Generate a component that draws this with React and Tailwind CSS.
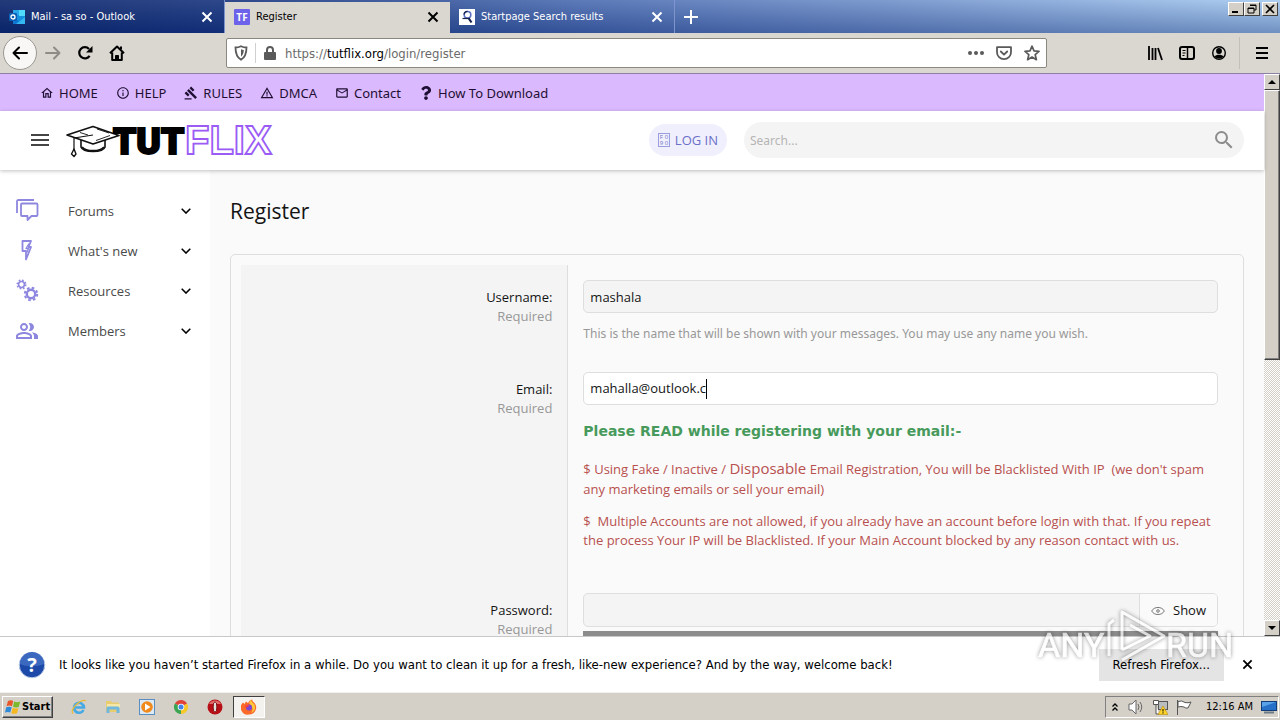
import clsx from "clsx"
import {
  MdGavel,
  MdInfoOutline,
  MdOutlineHome,
  MdOutlineMail,
  MdOutlinePeopleAlt,
  MdSearch,
  MdWarningAmber,
} from "react-icons/md"
import { FaQuestion } from "react-icons/fa"

const topLinks = [
  { label: "HOME", icon: MdOutlineHome },
  { label: "HELP", icon: MdInfoOutline },
  { label: "RULES", icon: MdGavel },
  { label: "DMCA", icon: MdWarningAmber },
  { label: "Contact", icon: MdOutlineMail },
  { label: "How To Download", icon: FaQuestion },
]

const sideLinks = [
  { label: "Forums", icon: ForumsIcon },
  { label: "What's new", icon: BoltIcon },
  { label: "Resources", icon: GearsIcon },
  { label: "Members", icon: MembersIcon },
]

/* ---------- icons ---------- */

function CloseIcon({ className, width = 2 }) {
  return (
    <svg viewBox="0 0 12 12" className={clsx("size-3", className)} fill="none" stroke="currentColor" strokeWidth={width}>
      <path d="M1.5 1.5l9 9M10.5 1.5l-9 9" />
    </svg>
  )
}

function OutlookIcon() {
  return (
    <svg viewBox="0 0 16 16" className="size-4">
      <rect x="4" y="1" width="12" height="14" rx="1" fill="#1490df" />
      <rect x="10" y="1" width="6" height="6" fill="#50d9ff" />
      <rect x="4" y="1" width="6" height="5" fill="#28a8ea" />
      <path d="M4 9l6 3 6-4v7H4z" fill="#0f78d4" />
      <path d="M16 8l-9 7h9z" fill="#35b8f1" />
      <rect x="0" y="4" width="8" height="8" rx="1" fill="#0a5fb4" />
      <circle cx="4" cy="8" r="2" fill="none" stroke="#fff" strokeWidth="1.3" />
    </svg>
  )
}

function TutflixFavicon() {
  return (
    <svg viewBox="0 0 16 16" className="size-4">
      <rect width="16" height="16" rx="1" fill="#6c63ea" />
      <text x="8" y="12" textAnchor="middle" fontSize="10" fontWeight="700" fill="#fff" fontFamily="Open Sans, sans-serif">
        TF
      </text>
    </svg>
  )
}

function StartpageIcon() {
  return (
    <svg viewBox="0 0 16 16" className="size-4">
      <rect width="16" height="16" fill="#fff" />
      <circle cx="8.500" cy="5.800" r="3.300" fill="none" stroke="#5a6fc0" strokeWidth="1.600" />
      <path d="M5 5.500a3.500 3.500 0 0 1 3.500-3.200" fill="none" stroke="#16204e" strokeWidth="1.200" />
      <path d="M9.500 9l3 4.500" stroke="#16204e" strokeWidth="2.200" />
      <path d="M3.500 9.500H9" stroke="#16204e" strokeWidth="1.200" />
    </svg>
  )
}

function ArrowIcon({ flip }) {
  return (
    <svg viewBox="0 0 16 16" className={clsx("size-4", flip && "rotate-180")} fill="none" stroke="currentColor" strokeWidth="2" strokeLinecap="round" strokeLinejoin="round">
      <path d="M15 8H1.5M7 2.5L1.5 8 7 13.5" />
    </svg>
  )
}

function ReloadIcon() {
  return (
    <svg viewBox="0 0 16 16" className="size-4" fill="none" stroke="currentColor" strokeWidth="2.2">
      <path d="M12.6 10.8A5.6 5.6 0 1 1 12 4" />
      <path d="M15.5 1v6.5H9z" fill="currentColor" stroke="none" />
    </svg>
  )
}

function HouseIcon() {
  return (
    <svg viewBox="0 0 16 16" className="size-4" fill="none" stroke="currentColor" strokeWidth="2" strokeLinejoin="round">
      <path d="M1 8.2L8 1.5l7 6.7M3.2 7.5V15h9.6V7.5" />
      <path d="M6.5 15v-4.5h3V15z" fill="currentColor" strokeWidth="1" />
      <path d="M12 1.5v3" />
    </svg>
  )
}

function ShieldIcon() {
  return (
    <svg viewBox="0 0 16 16" className="size-4">
      <path d="M8 1.200c2 1 3.800 1.300 5.500 1.300 0 5-.8 9.500-5.500 12.300C3.300 12 2.500 7.500 2.500 2.500 4.200 2.500 6 2.200 8 1.200z" fill="none" stroke="currentColor" strokeWidth="1.800" />
      <path d="M8 4.300c1 .4 1.800.6 2.800.7-.1 2.800-.8 5-2.800 6.700z" fill="currentColor" />
    </svg>
  )
}

function LockIcon() {
  return (
    <svg viewBox="0 0 16 16" className="size-4">
      <path d="M5 8V5a3 3 0 0 1 6 0v3" fill="none" stroke="currentColor" strokeWidth="2" />
      <rect x="2" y="7" width="12" height="8" rx="1" fill="currentColor" />
    </svg>
  )
}

function DotsIcon() {
  return (
    <svg viewBox="0 0 16 16" className="size-4" fill="currentColor">
      <circle cx="2" cy="8" r="2" />
      <circle cx="8" cy="8" r="2" />
      <circle cx="14" cy="8" r="2" />
    </svg>
  )
}

function PocketIcon() {
  return (
    <svg viewBox="0 0 16 16" className="size-4" fill="none" stroke="currentColor" strokeWidth="1.800" strokeLinecap="round" strokeLinejoin="round">
      <path d="M1 2.200h14v5a7 7 0 0 1-14 0z" />
      <path d="M4.800 6.500L8 9.600l3.200-3.100" />
    </svg>
  )
}

function StarIcon() {
  return (
    <svg viewBox="0 0 16 16" className="size-4" fill="none" stroke="currentColor" strokeWidth="1.700" strokeLinejoin="round">
      <path d="M8 1.200l2 4.700 5 .5-3.800 3.300 1.200 5L8 12l-4.400 2.700 1.200-5L1 6.400l5-.5z" />
    </svg>
  )
}

function LibraryIcon() {
  return (
    <svg viewBox="0 0 16 16" className="size-4" fill="none" stroke="currentColor" strokeWidth="1.800">
      <path d="M2 1v14M5.500 3v12M8.500 3v12M11 3l4 12" />
    </svg>
  )
}

function SidebarIcon() {
  return (
    <svg viewBox="0 0 16 16" className="size-4" fill="none" stroke="currentColor">
      <rect x="1" y="2" width="14" height="12" rx="2" strokeWidth="2" />
      <path d="M8.500 2v12" strokeWidth="1.500" />
      <path d="M3.500 5.500h3M3.500 8h3M3.500 10.500h2" strokeWidth="1" />
    </svg>
  )
}

function AccountIcon() {
  return (
    <svg viewBox="0 0 16 16" className="size-4">
      <circle cx="8" cy="8" r="6.300" fill="none" stroke="currentColor" strokeWidth="1.400" />
      <circle cx="8" cy="6" r="2.900" fill="currentColor" />
      <path d="M3.500 11.500C5 9.300 11 9.300 12.500 11.500 10.500 14 5.500 14 3.500 11.500z" fill="currentColor" />
    </svg>
  )
}

function BurgerIcon({ className }) {
  return (
    <svg viewBox="0 0 18 14" className={className} fill="none" stroke="currentColor" strokeWidth="2">
      <path d="M0 2h18M0 7h18M0 12h18" />
    </svg>
  )
}

function MenuIcon() {
  return (
    <svg viewBox="0 0 12 14" className="h-[14px] w-3" fill="none" stroke="currentColor" strokeWidth="2">
      <path d="M0 2h12M0 7h12M0 12h12" />
    </svg>
  )
}

function ForumsIcon() {
  return (
    <svg viewBox="0 0 24 24" className="size-6" fill="none" stroke="currentColor" strokeWidth="1.800" strokeLinejoin="round">
      <path d="M1 14V2.500Q1 1 2.500 1H18" />
      <path d="M6 4.500h14.500q1 0 1 1V16q0 1-1 1h-5l-4 4v-4H6q-1 0-1-1V5.500q0-1 1-1z" />
    </svg>
  )
}

function BoltIcon() {
  return (
    <svg viewBox="0 0 24 24" className="size-6" fill="none" stroke="currentColor" strokeWidth="1.800" strokeLinejoin="round">
      <path d="M6.500 2h8.500l-2.500 6H15L10 20.500V12H6.500z" />
      <path d="M13 4.500l-3 5h2.500l-1.500 4" strokeWidth="1.300" />
    </svg>
  )
}

function GearsIcon() {
  return (
    <svg viewBox="0 0 24 24" className="size-6" fill="none" stroke="currentColor">
      <circle cx="5.500" cy="5.500" r="2.900" strokeWidth="1.500" />
      <circle cx="5.500" cy="5.500" r="4.300" strokeWidth="1.500" strokeDasharray="1.700 1.677" />
      <circle cx="15" cy="15" r="4.200" strokeWidth="2.400" />
      <circle cx="15" cy="15" r="6.200" strokeWidth="2" strokeDasharray="2.600 2.270" />
    </svg>
  )
}

function MembersIcon() {
  return <MdOutlinePeopleAlt className="-ml-px size-6" />
}

function ChevronDown() {
  return (
    <svg viewBox="0 0 10 6" className="h-[6px] w-[10px] text-black" fill="none" stroke="currentColor" strokeWidth="1.600">
      <path d="M.7.7L5 5 9.300.7" />
    </svg>
  )
}

function EyeIcon() {
  return (
    <svg viewBox="0 0 14 10" className="h-[10px] w-[14px] text-[#777]" fill="none" stroke="currentColor">
      <path d="M.7 5C3 .3 11 .3 13.300 5 11 9.700 3 9.700.7 5z" />
      <circle cx="7" cy="5" r="1.300" />
    </svg>
  )
}

function TutflixLogo() {
  return (
    <svg viewBox="0 -8 208 52" className="h-[52px] w-[208px]" role="img" aria-label="TUTFLIX">
      <g stroke="#111" fill="none" strokeWidth="1.600" strokeLinejoin="round">
        <path d="M15 16v9c2 6 22 6 24 0v-8" fill="#fff" />
        <path d="M16 25c4 5 18 5 22 0" strokeWidth="2" />
        <path d="M1 13L27 4.500l26 9L27 22z" fill="#fff" />
        <path d="M27 13L8 16v12" strokeWidth="1.200" />
        <path d="M8 27l-2.500 5L8 34.500l2-2.500z" strokeWidth="1.400" />
        <path d="M31 7l12 4M14 10.500l8 2.500M30 18.500l14-5" strokeWidth=".9" />
      </g>
      <text x="47" y="32" fontSize="37" fontWeight="900" fontFamily="Roboto, sans-serif" fill="#000" stroke="#000" strokeWidth="2">
        TUT
      </text>
      <text x="119" y="32" fontSize="40" fontWeight="700" fontFamily="Liberation Sans, sans-serif" fill="#fff" stroke="#9a5cf5" strokeWidth="1.800">
        FLIX
      </text>
    </svg>
  )
}

/* ---------- browser frame ---------- */

function Tab({ icon, title, active }) {
  return (
    <div
      className={clsx(
        "flex w-[225px] items-center gap-[6px] pr-[11px] pl-[9px]",
        active ? "mt-[2px] bg-[#dad6d0] pb-px text-black" : "border-r border-[#7d95cc] pt-px text-white",
      )}
    >
      {icon}
      <span className="flex-1 truncate">{title}</span>
      <button aria-label="Close tab">
        <CloseIcon />
      </button>
    </div>
  )
}

function WindowButton({ label, children }) {
  return (
    <button
      aria-label={label}
      className="flex h-[14px] w-4 items-center justify-center border border-t-white border-r-[#404040] border-b-[#404040] border-l-white bg-[#d4d0c8] text-black"
    >
      <svg viewBox="0 0 10 10" className="size-[10px]" fill="none" stroke="currentColor">
        {children}
      </svg>
    </button>
  )
}

function TabStrip() {
  return (
    <div className="flex h-[33px] shrink-0 bg-[linear-gradient(to_bottom,rgba(255,255,255,0.1),rgba(10,36,106,0.35)),linear-gradient(to_right,#0a246a_0%,#15327c_17%,#4a6bb0_45%,#7292cb_70%,#a6caf0_100%)] text-[11px]">
      <Tab icon={<OutlookIcon />} title="Mail - sa so - Outlook" />
      <Tab icon={<TutflixFavicon />} title="Register" active />
      <Tab icon={<StartpageIcon />} title="Startpage Search results" />
      <button aria-label="New tab" className="flex w-8 items-center justify-center text-white">
        <svg viewBox="0 0 14 14" className="size-[14px]" stroke="currentColor" strokeWidth="2">
          <path d="M7 0v14M0 7h14" />
        </svg>
      </button>
      <div className="ml-auto flex pt-[2px] pr-[2px]">
        <WindowButton label="Minimize">
          <path d="M1 8h6" strokeWidth="2" />
        </WindowButton>
        <WindowButton label="Restore">
          <path d="M3 1h6v5H7M3 1.500h6M1 4h6v5H1zM1 4.500h6" />
        </WindowButton>
        <div className="w-[2px]" />
        <WindowButton label="Close">
          <path d="M1 1l8 8M9 1L1 9" strokeWidth="1.600" />
        </WindowButton>
      </div>
    </div>
  )
}

function Toolbar() {
  return (
    <div className="flex h-[41px] shrink-0 items-center border-b border-[#8d80a5] bg-[#dad6d0] pr-3 pl-[3px] text-black">
      <div className="flex items-center gap-4">
        <button aria-label="Back" className="flex size-[34px] items-center justify-center rounded-full border border-[#9a9790] bg-[#f8f7f5]">
          <ArrowIcon />
        </button>
        <div className="-ml-2 flex gap-4">
          <button aria-label="Forward" className="text-[#8f8c87]">
            <ArrowIcon flip />
          </button>
          <button aria-label="Reload">
            <ReloadIcon />
          </button>
          <button aria-label="Home">
            <HouseIcon />
          </button>
        </div>
      </div>
      <div className="ml-[101px] flex h-[30px] w-[821px] items-center rounded-xs border border-[#8b8880] bg-white px-[6px] text-[#5a5a5a]">
        <ShieldIcon />
        <div className="mx-[6px] h-5 w-px bg-[#d0d0d0]" />
        <LockIcon />
        <div className="flex-1 pt-px pl-[7px] text-[13px] text-[#6a6a6a]">
          https://<span className="text-black">tutflix.org</span>/login/register
        </div>
        <div className="flex gap-3">
          <DotsIcon />
          <PocketIcon />
          <StarIcon />
        </div>
      </div>
      <div className="ml-auto flex items-center gap-4">
        <LibraryIcon />
        <SidebarIcon />
        <AccountIcon />
        <div className="-ml-1 h-8 w-px bg-[#c4c0b9]" />
        <button aria-label="Open menu">
          <MenuIcon />
        </button>
      </div>
    </div>
  )
}

function ScrollButton({ label, d }) {
  return (
    <button
      aria-label={label}
      className="flex h-4 shrink-0 items-center justify-center border border-t-white border-r-[#404040] border-b-[#404040] border-l-white bg-[#d4d0c8]"
    >
      <svg viewBox="0 0 8 4" className="h-1 w-2">
        <path d={d} fill="#000" />
      </svg>
    </button>
  )
}

function Scrollbar() {
  return (
    <div className="flex w-4 shrink-0 flex-col bg-[repeating-conic-gradient(#d4d0c8_0_25%,#fff_0_50%)] bg-[length:2px_2px]">
      <ScrollButton label="Scroll up" d="M0 4L4 0l4 4z" />
      <div className="h-[48%] border border-t-white border-r-[#404040] border-b-[#404040] border-l-white bg-[#d4d0c8] shadow-[inset_-1px_-1px_0_#808080]" />
      <div className="flex-1" />
      <ScrollButton label="Scroll down" d="M0 0h8L4 4z" />
    </div>
  )
}

/* ---------- site ---------- */

function TopLinks() {
  return (
    <nav className="flex h-[37px] shrink-0 items-center gap-[18px] bg-[#dbb9fe] pt-px pl-10 font-[Noto_Sans,sans-serif] text-[13px] text-[#1e0f33]">
      {topLinks.map(({ label, icon: Icon }) => (
        <a key={label} href="#" className="flex items-center gap-[5px]">
          <Icon className="size-[14px]" />
          <span className="pt-px">{label}</span>
        </a>
      ))}
    </nav>
  )
}

function SiteHeader() {
  return (
    <header className="z-10 flex h-[59px] shrink-0 items-center bg-white pr-5 pb-px pl-[31px] shadow-[0_1px_4px_rgba(0,0,0,0.25)]">
      <button aria-label="Menu" className="text-[#444]">
        <BurgerIcon className="h-[14px] w-[18px]" />
      </button>
      <a href="#" className="ml-[17px]">
        <TutflixLogo />
      </a>
      <a href="#" className="ml-auto flex h-8 items-center gap-[5px] rounded-full bg-[#f0effd] px-[9px] text-[13px] text-[#6a6fc8]">
        {/* missing glyph box */}
        <span className="grid h-[14px] w-3 grid-cols-2 border border-[#9a9ee0] text-center text-[6px] leading-[6px]">
          <span>F</span>
          <span>0</span>
          <span>9</span>
          <span>0</span>
        </span>
        <span className="pt-px">LOG IN</span>
      </a>
      <div className="ml-[17px] flex h-9 w-[500px] items-center rounded-full bg-[#f4f4f4] pr-2 pl-[6px]">
        <input
          type="text"
          aria-label="Search"
          placeholder="Search..."
          className="min-w-0 flex-1 bg-transparent pt-px font-[Noto_Sans,sans-serif] text-[12px] outline-none placeholder:text-[#b5b5b5]"
        />
        <MdSearch className="size-6 text-[#8c8c8c]" />
      </div>
    </header>
  )
}

function Sidebar() {
  return (
    <aside className="w-[210px] shrink-0 bg-white pt-[21px]">
      {sideLinks.map(({ label, icon: Icon }) => (
        <a key={label} href="#" className="flex h-10 items-center pr-[19px] pl-4 text-[13px] text-[#4a4a4a]">
          <span className="w-[52px] text-[#8e87e0]">
            <Icon />
          </span>
          <span className="flex-1 pt-px">{label}</span>
          <ChevronDown />
        </a>
      ))}
    </aside>
  )
}

function FormRow({ id, label, className, children }) {
  return (
    <div className={clsx("flex", className)}>
      <div className="w-[33%] shrink-0 border-r border-[#dedede] bg-[#f4f4f4] pt-[22px] pr-[15px] text-right">
        <label htmlFor={id} className="block leading-5 text-[#141414]">
          {label}
        </label>
        <div className="leading-[18px] text-[#989898]">Required</div>
      </div>
      <div className="min-w-0 flex-1 p-[15px]">{children}</div>
    </div>
  )
}

function RegisterForm() {
  return (
    <form className="mt-[29px] rounded-[5px] border border-[#dedede] px-[10px] pt-[10px] text-[13px]">
      <FormRow id="username" label="Username:" className="h-[92px]">
        <input
          id="username"
          type="text"
          defaultValue="mashala"
          className="block h-[33px] w-full rounded-[5px] border border-[#dedede] bg-[#f4f4f4] px-[6px] text-[#141414] outline-none"
        />
        <p className="mt-[11px] font-[Noto_Sans,sans-serif] text-[12px] leading-5 text-[#989898]">
          This is the name that will be shown with your messages. You may use any name you wish.
        </p>
      </FormRow>

      <FormRow id="email" label="Email:" className="h-[221px]">
        <div className="flex h-[33px] items-center rounded-[5px] border border-[#dedede] bg-white px-[6px]">
          <input
            id="email"
            type="email"
            defaultValue="mahalla@outlook.c"
            className="field-sizing-content pt-px text-[#141414] outline-none"
          />
          <span className="h-5 w-px bg-black" />
        </div>
        <p className="mt-4 font-[DejaVu_Sans,sans-serif] text-[14px] leading-5 font-bold text-[#479a5b]">
          Please READ while registering with your email:-
        </p>
        <p className="mt-[17px] leading-5 text-[#b8504f]">
          $ Using Fake / Inactive / <span className="text-[15px]">Disposable</span> Email Registration, You will be
          Blacklisted With IP&nbsp; (we don't spam any marketing emails or sell your email)
        </p>
        <p className="mt-[13px] leading-[19px] text-[#b8504f]">
          $&nbsp; Multiple Accounts are not allowed, if you already have an account before login with that. If you
          repeat the process Your IP will be Blacklisted. If your Main Account blocked by any reason contact with us.
        </p>
      </FormRow>

      <FormRow id="password" label="Password:" className="h-[120px]">
        <div className="flex h-[34px] overflow-hidden rounded-[5px] border border-[#dedede] bg-[#f4f4f4]">
          <input id="password" type="password" className="min-w-0 flex-1 px-[6px] outline-none" />
          <button type="button" className="flex items-center gap-2 border-l border-[#dedede] bg-[#fafafa] px-[11px] pt-px text-[#141414]">
            <EyeIcon />
            Show
          </button>
        </div>
        <div className="mt-1 h-3 bg-[#8c8c8c]" />
      </FormRow>
    </form>
  )
}

/* ---------- desktop ---------- */

function InfoBar() {
  return (
    <div className="flex h-14 shrink-0 items-center border-t border-[#c8c8c8] bg-white pr-[27px] pl-[18px] text-[13px] text-black">
      <svg viewBox="0 0 28 28" className="size-7">
        <circle cx="14" cy="14" r="12.800" fill="#1d4aa8" stroke="#b9c8e6" />
        <path d="M2 13a12 12 0 0 1 24 0c-7 3-17 3-24 0z" fill="#3c69c0" />
        <text x="14" y="21" textAnchor="middle" fontSize="20" fontWeight="700" fill="#fff" fontFamily="Open Sans, sans-serif">
          ?
        </text>
      </svg>
      <p className="flex-1 pt-px pl-[13px]">
        It looks like you haven’t started Firefox in a while. Do you want to clean it up for a fresh, like-new
        experience? And by the way, welcome back!
      </p>
      <button className="h-8 bg-[#e4e4e4] px-[14px]">Refresh Firefox...</button>
      <button aria-label="Dismiss" className="ml-[18px]">
        <CloseIcon className="size-[11px]" />
      </button>
    </div>
  )
}

function Taskbar() {
  return (
    <div className="flex h-7 shrink-0 items-center border-t border-[#f2f0ec] bg-[#d4d0c8] pt-px pr-px pl-[2px] text-[11px] text-black">
      <button className="flex h-[22px] items-center gap-px border border-t-white border-r-[#404040] border-b-[#404040] border-l-white px-[2px] font-bold shadow-[inset_-1px_-1px_0_#808080]">
        <svg viewBox="0 0 16 16" className="size-4">
          <path d="M3 2q3-1.500 5.200 0L7 7.200Q4.500 6 1.500 7.200z" fill="#e8562a" />
          <path d="M9.200 2.500q3 1.300 6 0L13.700 8Q11 9 8 7.700z" fill="#7ab82c" />
          <path d="M1.200 8.300q3-1.300 5.500 0L5.200 13.500Q3 12.300 0 13.500z" fill="#2f8ad8" />
          <path d="M7.700 8.800q2.800 1.300 5.700.2L12 14.200q-3 1.200-5.700 0z" fill="#f5b91f" />
        </svg>
        Start
      </button>
      <div className="flex flex-1 items-center gap-[18px] pl-[18px]">
        {/* Internet Explorer */}
        <svg viewBox="0 0 16 16" className="size-4" fill="none">
          <path d="M12.500 11A5 5 0 1 1 13 8.500H4" stroke="#45a9e4" strokeWidth="2.600" />
          <path d="M2 14.500C-2 11 10-1 15 2" stroke="#e9b93a" strokeWidth="1.300" />
        </svg>
        {/* Explorer */}
        <svg viewBox="0 0 16 16" className="size-4">
          <path d="M1 2h5l1 1.500h7V13H1z" fill="#e8cd70" />
          <path d="M2 5h13v4H2z" fill="#f7e7a6" />
          <path d="M1.500 14V9q0-1.500 1.500-1.500h10q1.500 0 1.500 1.500v5h-3v-3.500h-7V14z" fill="#70b8dd" />
        </svg>
        {/* Media Player */}
        <svg viewBox="0 0 16 16" className="size-4">
          <rect x=".5" y=".5" width="15" height="15" fill="#dceaf6" stroke="#5a8ec0" />
          <circle cx="8" cy="8" r="5.800" fill="#f08a1c" />
          <path d="M6 4.500l5.500 3.500L6 11.500z" fill="#fff" />
        </svg>
        {/* Chrome */}
        <svg viewBox="0 0 16 16" className="size-4">
          <path d="M8 8L1.900 4.500A7 7 0 0 1 14.100 4.500z" fill="#e0433a" />
          <path d="M8 8l6.100-3.500A7 7 0 0 1 8 15z" fill="#f7c928" />
          <path d="M8 8v7A7 7 0 0 1 1.900 4.500z" fill="#3ca553" />
          <circle cx="8" cy="8" r="3.300" fill="#fff" />
          <circle cx="8" cy="8" r="2.500" fill="#4285e8" />
        </svg>
        {/* Opera */}
        <svg viewBox="0 0 16 16" className="size-4">
          <circle cx="8" cy="8" r="7.500" fill="#b80f17" />
          <path d="M2 5a7 7 0 0 1 12 0z" fill="#e26a68" />
          <ellipse cx="8" cy="8" rx="1.900" ry="5.200" fill="#e4e0da" stroke="#7c0a10" />
        </svg>
        <button
          aria-label="Firefox"
          className="-ml-2 flex h-[22px] w-8 items-center justify-center border border-t-[#404040] border-r-white border-b-white border-l-[#404040] bg-[#f4f2ef]"
        >
          <svg viewBox="0 0 16 16" className="size-4">
            <path d="M8 15.500A7 7 0 0 1 2 3.500L3.500 5 5 2.500 7 4q1-3 4-3.500.5 2 2.500 3.500A7 7 0 0 1 8 15.500z" fill="#fb6a28" />
            <path d="M10 .5q0 2.500 3.500 5 2 6-3.500 8.500 4-5-2-10z" fill="#ffc83a" />
            <circle cx="8" cy="8.500" r="3" fill="#7a46d8" />
            <path d="M3 8q3-3 5.500-1.500L6 8.500z" fill="#f5403c" />
          </svg>
        </button>
      </div>
      <div className="flex h-[22px] items-center border border-t-[#808080] border-r-white border-b-white border-l-[#808080] pl-[6px]">
        <svg viewBox="0 0 6 8" className="h-2 w-[6px]" fill="none" stroke="#000" strokeWidth="1.300">
          <path d="M.5 3.500L3 1l2.500 2.500M.5 7.500L3 5l2.500 2.500" />
        </svg>
        <svg viewBox="0 0 16 16" className="ml-[10px] size-4" fill="none" stroke="#666">
          <path d="M1 5h3l4-4v14l-4-4H1z" fill="#fff" />
          <path d="M10 5q2 3 0 6M12 3q3.500 5 0 10" />
        </svg>
        <svg viewBox="0 0 16 16" className="ml-2 size-4">
          <rect x="6.500" y="2.500" width="9" height="8" fill="#b9bdc0" stroke="#555" />
          <path d="M1.500 1.500h5v4h-5zM4 5.500V15h3" fill="#fff" stroke="#555" />
          <path d="M11 7l5 8.500H6z" fill="#ffd42a" stroke="#b58a00" strokeWidth=".6" />
          <path d="M11 10v2.500M11 13.300v1.200" stroke="#000" />
        </svg>
        <svg viewBox="0 0 16 16" className="ml-2 size-4" stroke="#555">
          <path d="M1.500 1v15" fill="none" />
          <path d="M2 2.500q4-1.500 7 1 3 .8 6-.5l-3 6q-2.500.5-4-1-3-1-6 0z" fill="#fff" />
        </svg>
        <span className="ml-[14px]">12:16 AM</span>
        <svg viewBox="0 0 16 16" className="mr-px ml-2 size-4">
          <rect x=".5" y="2.500" width="15" height="9" fill="#2670c8" stroke="#123c78" />
          <path d="M1 3h14L1 8z" fill="#5aa2e8" />
          <path d="M3 13.500h10" stroke="#6d7a88" strokeWidth="2" />
        </svg>
      </div>
    </div>
  )
}

function Watermark() {
  return (
    <svg
      viewBox="0 0 204 66"
      className="pointer-events-none absolute right-10 bottom-[50px] z-20 h-[66px] w-[204px] drop-shadow-[0_0_2px_rgba(0,0,0,0.6)]"
      fill="none"
      stroke="#fff"
      opacity="0.7"
    >
      <text x="2" y="53" fontSize="34" fill="#fff" strokeWidth=".6" fontFamily="Roboto, sans-serif">
        ANY
      </text>
      <text x="130" y="53" fontSize="34" fill="#fff" strokeWidth=".6" fontFamily="Roboto, sans-serif">
        RUN
      </text>
      <path d="M78 16l-5 4v32M86 46V8l42 24-42 24M86 46l28-14-20-11" strokeWidth="3" strokeLinejoin="round" />
    </svg>
  )
}

export default function App() {
  return (
    <div className="relative flex h-screen flex-col overflow-hidden bg-white font-[DejaVu_Sans_Condensed,DejaVu_Sans,sans-serif]">
      <TabStrip />
      <Toolbar />
      <div className="flex min-h-0 flex-1">
        <div className="flex min-w-0 flex-1 flex-col font-[Open_Sans,sans-serif]">
          <TopLinks />
          <SiteHeader />
          <div className="flex min-h-0 flex-1 overflow-hidden">
            <Sidebar />
            <main className="min-w-0 flex-1 bg-[#fafafa] pt-[27px] pr-5 pl-5">
              <h1 className="text-[21px] leading-7 text-[#141414]">Register</h1>
              <RegisterForm />
            </main>
          </div>
        </div>
        <Scrollbar />
      </div>
      <InfoBar />
      <Taskbar />
      <Watermark />
    </div>
  )
}
